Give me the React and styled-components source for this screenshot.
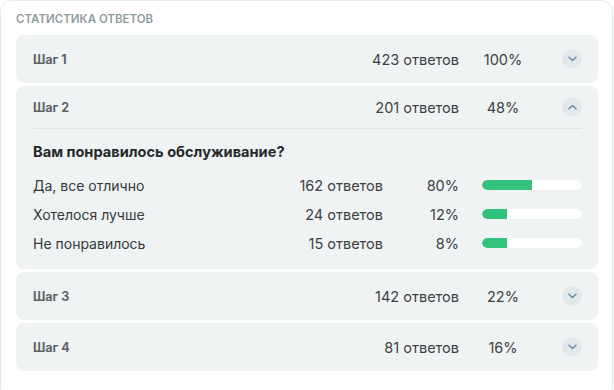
import React from "react"
import styled, { createGlobalStyle } from "styled-components"

const Global = createGlobalStyle`
  body {
    margin: 0;
    background: #ffffff;
    font-family: Inter, "Noto Sans", sans-serif;
  }
`

const Card = styled.div`
  width: 613px;
  height: 400px;
  box-sizing: border-box;
  border: 1px solid #e4eaec;
  border-radius: 12px;
  padding: 11px 14px 0 15px;
  background: #ffffff;
`

const Title = styled.div`
  font-size: 11.5px;
  font-weight: 600;
  color: #8f9c9d;
  text-transform: uppercase;
  line-height: 14px;
  margin-bottom: 9px;
`

const List = styled.div`
  display: flex;
  flex-direction: column;
  gap: 3px;
`

const Step = styled.div`
  background: #f0f3f4;
  border-radius: 8px;
  padding: 0 16px 0 17px;
`

const Head = styled.div`
  display: flex;
  align-items: center;
  height: ${p => (p.open ? "42px" : "48px")};
  border-bottom: ${p => (p.open ? "1px solid #dde5e7" : "none")};
`

const StepName = styled.div`
  flex: 1;
  font-size: 12.5px;
  font-weight: 700;
  color: #5a6567;
`

const Count = styled.div`
  font-size: 14.5px;
  color: #3c4142;
  text-align: right;
  white-space: nowrap;
`

const Pct = styled.div`
  font-size: 14.5px;
  color: #3c4142;
  width: ${p => (p.wide ? "76px" : "44px")};
  margin-left: ${p => (p.wide ? "0" : "22px")};
  text-align: ${p => (p.wide ? "right" : "center")};
`

const Toggle = styled.div`
  width: 20px;
  height: 20px;
  margin-left: 37px;
  border-radius: 50%;
  background: #e2e9eb;
  display: flex;
  align-items: center;
  justify-content: center;
  svg {
    transform: ${p => (p.open ? "rotate(180deg)" : "none")};
  }
`

const Body = styled.div`
  padding: 13px 0 16px;
`

const Question = styled.div`
  font-size: 14.6px;
  font-weight: 700;
  color: #25292a;
  line-height: 20px;
  margin-bottom: 13px;
`

const Answers = styled.div`
  display: flex;
  flex-direction: column;
  gap: 9px;
`

const Answer = styled.div`
  display: flex;
  align-items: center;
  height: 20px;
`

const AnswerText = styled.div`
  flex: 1;
  font-size: 14px;
  color: #33393a;
`

const Track = styled.div`
  height: 10px;
  width: 100px;
  margin-left: 23px;
  border-radius: 5px;
  background: #ffffff;
  overflow: hidden;
`

const Fill = styled.div`
  height: 100%;
  background: #33c27b;
  border-radius: 5px 0 0 5px;
`

const Chevron = () => (
  <svg width="9" height="6" viewBox="0 0 9 6" fill="none">
    <path d="M1 1.2L4.5 4.5L8 1.2" stroke="#5d88a3" strokeWidth="1.4" strokeLinecap="round" strokeLinejoin="round" />
  </svg>
)

const steps = [
  { name: "Шаг 1", count: "423 ответов", pct: "100%" },
  { name: "Шаг 2", count: "201 ответов", pct: "48%", open: true },
  { name: "Шаг 3", count: "142 ответов", pct: "22%" },
  { name: "Шаг 4", count: "81 ответов", pct: "16%" },
]

const answers = [
  { text: "Да, все отлично", count: "162 ответов", pct: "80%", bar: 50 },
  { text: "Хотелося лучше", count: "24 ответов", pct: "12%", bar: 25 },
  { text: "Не понравилось", count: "15 ответов", pct: "8%", bar: 25 },
]

export default function App() {
  return (
    <>
      <Global />
      <Card>
        <Title>Статистика ответов</Title>
        <List>
          {steps.map(s => (
            <Step key={s.name}>
              <Head open={s.open}>
                <StepName>{s.name}</StepName>
                <Count>{s.count}</Count>
                <Pct>{s.pct}</Pct>
                <Toggle open={s.open}><Chevron /></Toggle>
              </Head>
              {s.open && (
                <Body>
                  <Question>Вам понравилось обслуживание?</Question>
                  <Answers>
                    {answers.map(a => (
                      <Answer key={a.text}>
                        <AnswerText>{a.text}</AnswerText>
                        <Count>{a.count}</Count>
                        <Pct wide>{a.pct}</Pct>
                        <Track><Fill style={{ width: a.bar + "px" }} /></Track>
                      </Answer>
                    ))}
                  </Answers>
                </Body>
              )}
            </Step>
          ))}
        </List>
      </Card>
    </>
  )
}
